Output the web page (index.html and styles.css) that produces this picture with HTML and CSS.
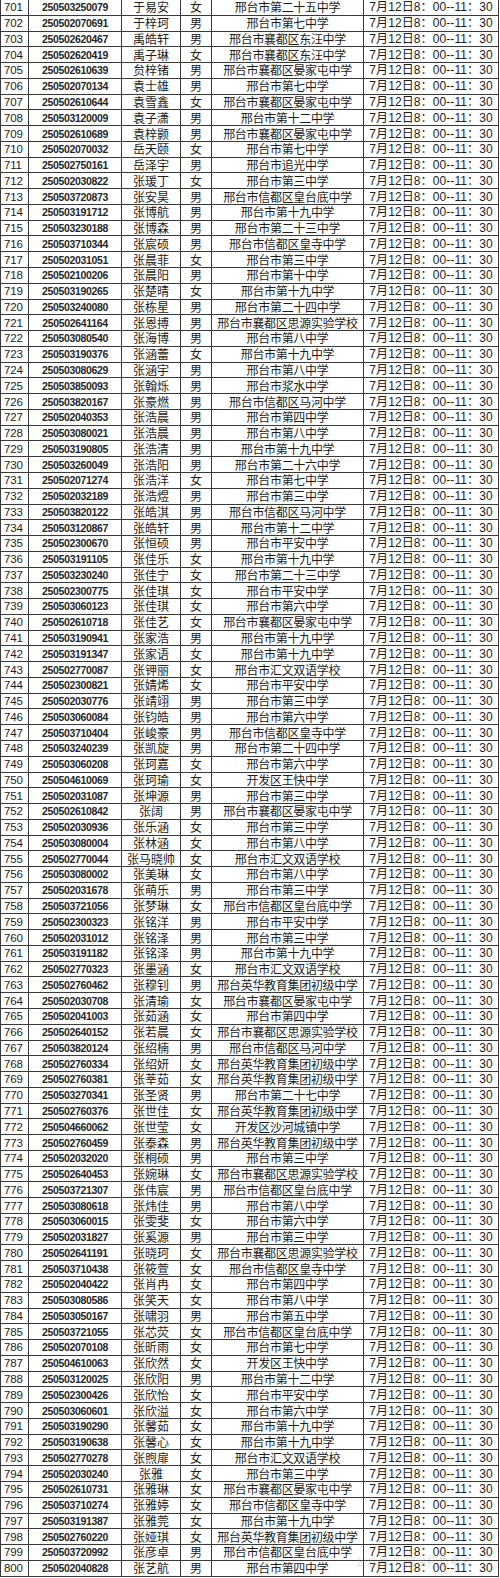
FILE: index.html
```html
<!DOCTYPE html>
<html lang="zh-CN">
<head>
<meta charset="utf-8">
<title>名单</title>
<link rel="stylesheet" href="styles.css">
</head>
<body>
<div class="sheet">
<div class="row"><span class="no">701</span><span class="id">250503250079</span><span class="nm">于易安</span><span class="sx">女</span><span class="sc">邢台市第二十五中学</span><span class="tm">7月12日8：00--11：30</span></div>
<div class="row"><span class="no">702</span><span class="id">250502070691</span><span class="nm">于梓珂</span><span class="sx">男</span><span class="sc">邢台市第七中学</span><span class="tm">7月12日8：00--11：30</span></div>
<div class="row"><span class="no">703</span><span class="id">250502620467</span><span class="nm">禹皓轩</span><span class="sx">男</span><span class="sc">邢台市襄都区东汪中学</span><span class="tm">7月12日8：00--11：30</span></div>
<div class="row"><span class="no">704</span><span class="id">250502620419</span><span class="nm">禹子琳</span><span class="sx">女</span><span class="sc">邢台市襄都区东汪中学</span><span class="tm">7月12日8：00--11：30</span></div>
<div class="row"><span class="no">705</span><span class="id">250502610639</span><span class="nm">贠梓锗</span><span class="sx">男</span><span class="sc">邢台市襄都区晏家屯中学</span><span class="tm">7月12日8：00--11：30</span></div>
<div class="row"><span class="no">706</span><span class="id">250502070134</span><span class="nm">袁士雄</span><span class="sx">男</span><span class="sc">邢台市第七中学</span><span class="tm">7月12日8：00--11：30</span></div>
<div class="row"><span class="no">707</span><span class="id">250502610644</span><span class="nm">袁雪鑫</span><span class="sx">女</span><span class="sc">邢台市襄都区晏家屯中学</span><span class="tm">7月12日8：00--11：30</span></div>
<div class="row"><span class="no">708</span><span class="id">250503120009</span><span class="nm">袁子潇</span><span class="sx">男</span><span class="sc">邢台市第十二中学</span><span class="tm">7月12日8：00--11：30</span></div>
<div class="row"><span class="no">709</span><span class="id">250502610689</span><span class="nm">袁梓颢</span><span class="sx">男</span><span class="sc">邢台市襄都区晏家屯中学</span><span class="tm">7月12日8：00--11：30</span></div>
<div class="row"><span class="no">710</span><span class="id">250502070032</span><span class="nm">岳天颐</span><span class="sx">女</span><span class="sc">邢台市第七中学</span><span class="tm">7月12日8：00--11：30</span></div>
<div class="row"><span class="no">711</span><span class="id">250502750161</span><span class="nm">岳泽宇</span><span class="sx">男</span><span class="sc">邢台市追光中学</span><span class="tm">7月12日8：00--11：30</span></div>
<div class="row"><span class="no">712</span><span class="id">250502030822</span><span class="nm">张瑗丁</span><span class="sx">女</span><span class="sc">邢台市第三中学</span><span class="tm">7月12日8：00--11：30</span></div>
<div class="row"><span class="no">713</span><span class="id">250503720873</span><span class="nm">张安昊</span><span class="sx">男</span><span class="sc">邢台市信都区皇台底中学</span><span class="tm">7月12日8：00--11：30</span></div>
<div class="row"><span class="no">714</span><span class="id">250503191712</span><span class="nm">张博航</span><span class="sx">男</span><span class="sc">邢台市第十九中学</span><span class="tm">7月12日8：00--11：30</span></div>
<div class="row"><span class="no">715</span><span class="id">250503230188</span><span class="nm">张博森</span><span class="sx">男</span><span class="sc">邢台市第二十三中学</span><span class="tm">7月12日8：00--11：30</span></div>
<div class="row"><span class="no">716</span><span class="id">250503710344</span><span class="nm">张宸硕</span><span class="sx">男</span><span class="sc">邢台市信都区皇寺中学</span><span class="tm">7月12日8：00--11：30</span></div>
<div class="row"><span class="no">717</span><span class="id">250502031051</span><span class="nm">张晨菲</span><span class="sx">女</span><span class="sc">邢台市第三中学</span><span class="tm">7月12日8：00--11：30</span></div>
<div class="row"><span class="no">718</span><span class="id">250502100206</span><span class="nm">张晨阳</span><span class="sx">男</span><span class="sc">邢台市第十中学</span><span class="tm">7月12日8：00--11：30</span></div>
<div class="row"><span class="no">719</span><span class="id">250503190265</span><span class="nm">张楚晴</span><span class="sx">女</span><span class="sc">邢台市第十九中学</span><span class="tm">7月12日8：00--11：30</span></div>
<div class="row"><span class="no">720</span><span class="id">250503240080</span><span class="nm">张栋星</span><span class="sx">男</span><span class="sc">邢台市第二十四中学</span><span class="tm">7月12日8：00--11：30</span></div>
<div class="row"><span class="no">721</span><span class="id">250502641164</span><span class="nm">张恩搏</span><span class="sx">男</span><span class="sc">邢台市襄都区思源实验学校</span><span class="tm">7月12日8：00--11：30</span></div>
<div class="row"><span class="no">722</span><span class="id">250503080540</span><span class="nm">张海博</span><span class="sx">男</span><span class="sc">邢台市第八中学</span><span class="tm">7月12日8：00--11：30</span></div>
<div class="row"><span class="no">723</span><span class="id">250503190376</span><span class="nm">张涵蕾</span><span class="sx">女</span><span class="sc">邢台市第十九中学</span><span class="tm">7月12日8：00--11：30</span></div>
<div class="row"><span class="no">724</span><span class="id">250503080629</span><span class="nm">张涵宇</span><span class="sx">男</span><span class="sc">邢台市第八中学</span><span class="tm">7月12日8：00--11：30</span></div>
<div class="row"><span class="no">725</span><span class="id">250503850093</span><span class="nm">张翰烁</span><span class="sx">男</span><span class="sc">邢台市浆水中学</span><span class="tm">7月12日8：00--11：30</span></div>
<div class="row"><span class="no">726</span><span class="id">250503820167</span><span class="nm">张豪燃</span><span class="sx">男</span><span class="sc">邢台市信都区马河中学</span><span class="tm">7月12日8：00--11：30</span></div>
<div class="row"><span class="no">727</span><span class="id">250502040353</span><span class="nm">张浩晨</span><span class="sx">男</span><span class="sc">邢台市第四中学</span><span class="tm">7月12日8：00--11：30</span></div>
<div class="row"><span class="no">728</span><span class="id">250503080021</span><span class="nm">张浩晨</span><span class="sx">男</span><span class="sc">邢台市第八中学</span><span class="tm">7月12日8：00--11：30</span></div>
<div class="row"><span class="no">729</span><span class="id">250503190805</span><span class="nm">张浩清</span><span class="sx">男</span><span class="sc">邢台市第十九中学</span><span class="tm">7月12日8：00--11：30</span></div>
<div class="row"><span class="no">730</span><span class="id">250503260049</span><span class="nm">张浩阳</span><span class="sx">男</span><span class="sc">邢台市第二十六中学</span><span class="tm">7月12日8：00--11：30</span></div>
<div class="row"><span class="no">731</span><span class="id">250502071274</span><span class="nm">张浩洋</span><span class="sx">女</span><span class="sc">邢台市第七中学</span><span class="tm">7月12日8：00--11：30</span></div>
<div class="row"><span class="no">732</span><span class="id">250502032189</span><span class="nm">张浩煜</span><span class="sx">男</span><span class="sc">邢台市第三中学</span><span class="tm">7月12日8：00--11：30</span></div>
<div class="row"><span class="no">733</span><span class="id">250503820122</span><span class="nm">张皓淇</span><span class="sx">男</span><span class="sc">邢台市信都区马河中学</span><span class="tm">7月12日8：00--11：30</span></div>
<div class="row"><span class="no">734</span><span class="id">250503120867</span><span class="nm">张皓轩</span><span class="sx">男</span><span class="sc">邢台市第十二中学</span><span class="tm">7月12日8：00--11：30</span></div>
<div class="row"><span class="no">735</span><span class="id">250502300670</span><span class="nm">张恒硕</span><span class="sx">男</span><span class="sc">邢台市平安中学</span><span class="tm">7月12日8：00--11：30</span></div>
<div class="row"><span class="no">736</span><span class="id">250503191105</span><span class="nm">张佳乐</span><span class="sx">女</span><span class="sc">邢台市第十九中学</span><span class="tm">7月12日8：00--11：30</span></div>
<div class="row"><span class="no">737</span><span class="id">250503230240</span><span class="nm">张佳宁</span><span class="sx">女</span><span class="sc">邢台市第二十三中学</span><span class="tm">7月12日8：00--11：30</span></div>
<div class="row"><span class="no">738</span><span class="id">250502300775</span><span class="nm">张佳琪</span><span class="sx">女</span><span class="sc">邢台市平安中学</span><span class="tm">7月12日8：00--11：30</span></div>
<div class="row"><span class="no">739</span><span class="id">250503060123</span><span class="nm">张佳琪</span><span class="sx">女</span><span class="sc">邢台市第六中学</span><span class="tm">7月12日8：00--11：30</span></div>
<div class="row"><span class="no">740</span><span class="id">250502610718</span><span class="nm">张佳艺</span><span class="sx">女</span><span class="sc">邢台市襄都区晏家屯中学</span><span class="tm">7月12日8：00--11：30</span></div>
<div class="row"><span class="no">741</span><span class="id">250503190941</span><span class="nm">张家浩</span><span class="sx">男</span><span class="sc">邢台市第十九中学</span><span class="tm">7月12日8：00--11：30</span></div>
<div class="row"><span class="no">742</span><span class="id">250503191347</span><span class="nm">张家语</span><span class="sx">女</span><span class="sc">邢台市第十九中学</span><span class="tm">7月12日8：00--11：30</span></div>
<div class="row"><span class="no">743</span><span class="id">250502770087</span><span class="nm">张钾丽</span><span class="sx">女</span><span class="sc">邢台市汇文双语学校</span><span class="tm">7月12日8：00--11：30</span></div>
<div class="row"><span class="no">744</span><span class="id">250502300821</span><span class="nm">张婧烯</span><span class="sx">女</span><span class="sc">邢台市平安中学</span><span class="tm">7月12日8：00--11：30</span></div>
<div class="row"><span class="no">745</span><span class="id">250502030776</span><span class="nm">张靖翊</span><span class="sx">男</span><span class="sc">邢台市第三中学</span><span class="tm">7月12日8：00--11：30</span></div>
<div class="row"><span class="no">746</span><span class="id">250503060084</span><span class="nm">张钧皓</span><span class="sx">男</span><span class="sc">邢台市第六中学</span><span class="tm">7月12日8：00--11：30</span></div>
<div class="row"><span class="no">747</span><span class="id">250503710404</span><span class="nm">张峻豪</span><span class="sx">男</span><span class="sc">邢台市信都区皇寺中学</span><span class="tm">7月12日8：00--11：30</span></div>
<div class="row"><span class="no">748</span><span class="id">250503240239</span><span class="nm">张凯旋</span><span class="sx">男</span><span class="sc">邢台市第二十四中学</span><span class="tm">7月12日8：00--11：30</span></div>
<div class="row"><span class="no">749</span><span class="id">250503060208</span><span class="nm">张珂嘉</span><span class="sx">女</span><span class="sc">邢台市第六中学</span><span class="tm">7月12日8：00--11：30</span></div>
<div class="row"><span class="no">750</span><span class="id">250504610069</span><span class="nm">张珂瑜</span><span class="sx">女</span><span class="sc">开发区王快中学</span><span class="tm">7月12日8：00--11：30</span></div>
<div class="row"><span class="no">751</span><span class="id">250502031087</span><span class="nm">张坤源</span><span class="sx">男</span><span class="sc">邢台市第三中学</span><span class="tm">7月12日8：00--11：30</span></div>
<div class="row"><span class="no">752</span><span class="id">250502610842</span><span class="nm">张阔</span><span class="sx">男</span><span class="sc">邢台市襄都区晏家屯中学</span><span class="tm">7月12日8：00--11：30</span></div>
<div class="row"><span class="no">753</span><span class="id">250502030936</span><span class="nm">张乐涵</span><span class="sx">女</span><span class="sc">邢台市第三中学</span><span class="tm">7月12日8：00--11：30</span></div>
<div class="row"><span class="no">754</span><span class="id">250503080004</span><span class="nm">张林涵</span><span class="sx">女</span><span class="sc">邢台市第八中学</span><span class="tm">7月12日8：00--11：30</span></div>
<div class="row"><span class="no">755</span><span class="id">250502770044</span><span class="nm">张马晓帅</span><span class="sx">女</span><span class="sc">邢台市汇文双语学校</span><span class="tm">7月12日8：00--11：30</span></div>
<div class="row"><span class="no">756</span><span class="id">250503080002</span><span class="nm">张美琳</span><span class="sx">女</span><span class="sc">邢台市第八中学</span><span class="tm">7月12日8：00--11：30</span></div>
<div class="row"><span class="no">757</span><span class="id">250502031678</span><span class="nm">张萌乐</span><span class="sx">男</span><span class="sc">邢台市第三中学</span><span class="tm">7月12日8：00--11：30</span></div>
<div class="row"><span class="no">758</span><span class="id">250503721056</span><span class="nm">张梦琳</span><span class="sx">女</span><span class="sc">邢台市信都区皇台底中学</span><span class="tm">7月12日8：00--11：30</span></div>
<div class="row"><span class="no">759</span><span class="id">250502300323</span><span class="nm">张铭洋</span><span class="sx">男</span><span class="sc">邢台市平安中学</span><span class="tm">7月12日8：00--11：30</span></div>
<div class="row"><span class="no">760</span><span class="id">250502031012</span><span class="nm">张铭泽</span><span class="sx">男</span><span class="sc">邢台市第三中学</span><span class="tm">7月12日8：00--11：30</span></div>
<div class="row"><span class="no">761</span><span class="id">250503191182</span><span class="nm">张铭泽</span><span class="sx">男</span><span class="sc">邢台市第十九中学</span><span class="tm">7月12日8：00--11：30</span></div>
<div class="row"><span class="no">762</span><span class="id">250502770323</span><span class="nm">张墨涵</span><span class="sx">女</span><span class="sc">邢台市汇文双语学校</span><span class="tm">7月12日8：00--11：30</span></div>
<div class="row"><span class="no">763</span><span class="id">250502760462</span><span class="nm">张穆钊</span><span class="sx">男</span><span class="sc">邢台英华教育集团初级中学</span><span class="tm">7月12日8：00--11：30</span></div>
<div class="row"><span class="no">764</span><span class="id">250502030708</span><span class="nm">张清瑜</span><span class="sx">女</span><span class="sc">邢台市襄都区晏家屯中学</span><span class="tm">7月12日8：00--11：30</span></div>
<div class="row"><span class="no">765</span><span class="id">250502041003</span><span class="nm">张茹涵</span><span class="sx">女</span><span class="sc">邢台市第四中学</span><span class="tm">7月12日8：00--11：30</span></div>
<div class="row"><span class="no">766</span><span class="id">250502640152</span><span class="nm">张若晨</span><span class="sx">女</span><span class="sc">邢台市襄都区思源实验学校</span><span class="tm">7月12日8：00--11：30</span></div>
<div class="row"><span class="no">767</span><span class="id">250503820124</span><span class="nm">张绍楠</span><span class="sx">男</span><span class="sc">邢台市信都区马河中学</span><span class="tm">7月12日8：00--11：30</span></div>
<div class="row"><span class="no">768</span><span class="id">250502760334</span><span class="nm">张绍妍</span><span class="sx">女</span><span class="sc">邢台英华教育集团初级中学</span><span class="tm">7月12日8：00--11：30</span></div>
<div class="row"><span class="no">769</span><span class="id">250502760381</span><span class="nm">张莘茹</span><span class="sx">女</span><span class="sc">邢台英华教育集团初级中学</span><span class="tm">7月12日8：00--11：30</span></div>
<div class="row"><span class="no">770</span><span class="id">250503270341</span><span class="nm">张圣贤</span><span class="sx">男</span><span class="sc">邢台市第二十七中学</span><span class="tm">7月12日8：00--11：30</span></div>
<div class="row"><span class="no">771</span><span class="id">250502760376</span><span class="nm">张世佳</span><span class="sx">女</span><span class="sc">邢台英华教育集团初级中学</span><span class="tm">7月12日8：00--11：30</span></div>
<div class="row"><span class="no">772</span><span class="id">250504660062</span><span class="nm">张世莹</span><span class="sx">女</span><span class="sc">开发区沙河城镇中学</span><span class="tm">7月12日8：00--11：30</span></div>
<div class="row"><span class="no">773</span><span class="id">250502760459</span><span class="nm">张泰森</span><span class="sx">男</span><span class="sc">邢台英华教育集团初级中学</span><span class="tm">7月12日8：00--11：30</span></div>
<div class="row"><span class="no">774</span><span class="id">250502032020</span><span class="nm">张桐硕</span><span class="sx">男</span><span class="sc">邢台市第三中学</span><span class="tm">7月12日8：00--11：30</span></div>
<div class="row"><span class="no">775</span><span class="id">250502640453</span><span class="nm">张婉琳</span><span class="sx">女</span><span class="sc">邢台市襄都区思源实验学校</span><span class="tm">7月12日8：00--11：30</span></div>
<div class="row"><span class="no">776</span><span class="id">250503721307</span><span class="nm">张伟宸</span><span class="sx">男</span><span class="sc">邢台市信都区皇台底中学</span><span class="tm">7月12日8：00--11：30</span></div>
<div class="row"><span class="no">777</span><span class="id">250503080618</span><span class="nm">张炜佳</span><span class="sx">男</span><span class="sc">邢台市第八中学</span><span class="tm">7月12日8：00--11：30</span></div>
<div class="row"><span class="no">778</span><span class="id">250503060015</span><span class="nm">张雯斐</span><span class="sx">女</span><span class="sc">邢台市第六中学</span><span class="tm">7月12日8：00--11：30</span></div>
<div class="row"><span class="no">779</span><span class="id">250502031827</span><span class="nm">张奚源</span><span class="sx">男</span><span class="sc">邢台市第三中学</span><span class="tm">7月12日8：00--11：30</span></div>
<div class="row"><span class="no">780</span><span class="id">250502641191</span><span class="nm">张晓珂</span><span class="sx">女</span><span class="sc">邢台市襄都区思源实验学校</span><span class="tm">7月12日8：00--11：30</span></div>
<div class="row"><span class="no">781</span><span class="id">250503710438</span><span class="nm">张筱萱</span><span class="sx">女</span><span class="sc">邢台市信都区皇寺中学</span><span class="tm">7月12日8：00--11：30</span></div>
<div class="row"><span class="no">782</span><span class="id">250502040422</span><span class="nm">张肖冉</span><span class="sx">女</span><span class="sc">邢台市第四中学</span><span class="tm">7月12日8：00--11：30</span></div>
<div class="row"><span class="no">783</span><span class="id">250503080586</span><span class="nm">张笑天</span><span class="sx">女</span><span class="sc">邢台市第八中学</span><span class="tm">7月12日8：00--11：30</span></div>
<div class="row"><span class="no">784</span><span class="id">250503050167</span><span class="nm">张啸羽</span><span class="sx">男</span><span class="sc">邢台市第五中学</span><span class="tm">7月12日8：00--11：30</span></div>
<div class="row"><span class="no">785</span><span class="id">250503721055</span><span class="nm">张芯荧</span><span class="sx">女</span><span class="sc">邢台市信都区皇台底中学</span><span class="tm">7月12日8：00--11：30</span></div>
<div class="row"><span class="no">786</span><span class="id">250502070108</span><span class="nm">张昕雨</span><span class="sx">女</span><span class="sc">邢台市第七中学</span><span class="tm">7月12日8：00--11：30</span></div>
<div class="row"><span class="no">787</span><span class="id">250504610063</span><span class="nm">张欣然</span><span class="sx">女</span><span class="sc">开发区王快中学</span><span class="tm">7月12日8：00--11：30</span></div>
<div class="row"><span class="no">788</span><span class="id">250503120025</span><span class="nm">张欣阳</span><span class="sx">男</span><span class="sc">邢台市第十二中学</span><span class="tm">7月12日8：00--11：30</span></div>
<div class="row"><span class="no">789</span><span class="id">250502300426</span><span class="nm">张欣怡</span><span class="sx">女</span><span class="sc">邢台市平安中学</span><span class="tm">7月12日8：00--11：30</span></div>
<div class="row"><span class="no">790</span><span class="id">250503060601</span><span class="nm">张欣溢</span><span class="sx">女</span><span class="sc">邢台市第六中学</span><span class="tm">7月12日8：00--11：30</span></div>
<div class="row"><span class="no">791</span><span class="id">250503190290</span><span class="nm">张馨茹</span><span class="sx">女</span><span class="sc">邢台市第十九中学</span><span class="tm">7月12日8：00--11：30</span></div>
<div class="row"><span class="no">792</span><span class="id">250503190638</span><span class="nm">张馨心</span><span class="sx">女</span><span class="sc">邢台市第十九中学</span><span class="tm">7月12日8：00--11：30</span></div>
<div class="row"><span class="no">793</span><span class="id">250502770278</span><span class="nm">张煦扉</span><span class="sx">女</span><span class="sc">邢台市汇文双语学校</span><span class="tm">7月12日8：00--11：30</span></div>
<div class="row"><span class="no">794</span><span class="id">250502030240</span><span class="nm">张雅</span><span class="sx">女</span><span class="sc">邢台市第三中学</span><span class="tm">7月12日8：00--11：30</span></div>
<div class="row"><span class="no">795</span><span class="id">250502610731</span><span class="nm">张雅琳</span><span class="sx">女</span><span class="sc">邢台市襄都区晏家屯中学</span><span class="tm">7月12日8：00--11：30</span></div>
<div class="row"><span class="no">796</span><span class="id">250503710274</span><span class="nm">张雅婷</span><span class="sx">女</span><span class="sc">邢台市信都区皇寺中学</span><span class="tm">7月12日8：00--11：30</span></div>
<div class="row"><span class="no">797</span><span class="id">250503191387</span><span class="nm">张雅莞</span><span class="sx">女</span><span class="sc">邢台市第十九中学</span><span class="tm">7月12日8：00--11：30</span></div>
<div class="row"><span class="no">798</span><span class="id">250502760220</span><span class="nm">张娅琪</span><span class="sx">女</span><span class="sc">邢台英华教育集团初级中学</span><span class="tm">7月12日8：00--11：30</span></div>
<div class="row"><span class="no">799</span><span class="id">250503720992</span><span class="nm">张彦卓</span><span class="sx">男</span><span class="sc">邢台市信都区皇台底中学</span><span class="tm">7月12日8：00--11：30</span></div>
<div class="row"><span class="no">800</span><span class="id">250502040828</span><span class="nm">张艺航</span><span class="sx">男</span><span class="sc">邢台市第四中学</span><span class="tm">7月12日8：00--11：30</span></div>
<div class="watermark">公众号 · 邢台招生考试</div>
</div>
</body>
</html>
```

FILE: styles.css
```css
html, body {
  margin: 0;
  padding: 0;
  background: #ffffff;
}

.sheet {
  position: relative;
  width: 499px;
  border-left: 1px solid #3a3a3a;
  box-sizing: border-box;
  color: #1c1c1c;
  font-family: "Liberation Sans", "Noto Sans CJK SC", sans-serif;
}

.row {
  display: grid;
  grid-template-columns: 28px 93px 59px 31px 152px 135px;
  height: 15.78px;
  box-sizing: border-box;
  border-bottom: 1px solid #3a3a3a;
}

.row > span {
  display: flex;
  align-items: center;
  justify-content: center;
  border-right: 1px solid #3a3a3a;
  white-space: nowrap;
  line-height: 14px;
}

.row > .no {
  justify-content: flex-start;
  padding-left: 3px;
  font-size: 11.5px;
  letter-spacing: -0.2px;
}

.row > .id {
  font-size: 10.5px;
  font-weight: bold;
  letter-spacing: -0.35px;
  color: #262626;
}

.row > .nm,
.row > .sx {
  font-family: "Noto Sans CJK SC", sans-serif;
  font-size: 12px;
}

.row > .sc {
  font-family: "Noto Sans CJK SC", sans-serif;
  font-size: 12px;
  letter-spacing: -0.3px;
}

.row > .tm {
  font-size: 12px;
  letter-spacing: 0.1px;
}

.watermark {
  position: absolute;
  left: 355px;
  top: 1554px;
  font-family: "Noto Sans CJK SC", sans-serif;
  font-size: 11px;
  line-height: 14px;
  color: rgba(150, 150, 150, 0.35);
  pointer-events: none;
}
```
